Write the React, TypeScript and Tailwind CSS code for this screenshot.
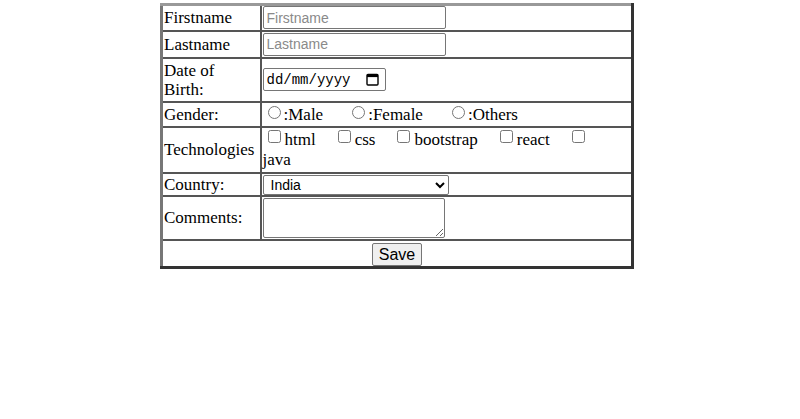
import React from 'react'

const serif = { fontFamily: '"Liberation Serif", "Times New Roman", serif' }
const sans = { fontFamily: '"Liberation Sans", Arial, sans-serif' }

function Label({ children }: { children: React.ReactNode }) {
  return <td className="border-2 border-[#555] pl-[1px] pr-[2px] py-0 w-[99px] align-middle leading-[19px]">{children}</td>
}

function Cell({ children, className = '' }: { children: React.ReactNode; className?: string }) {
  return <td className={`border-2 border-[#555] pl-[1px] pr-[2px] py-0 align-middle leading-[19px] ${className}`}>{children}</td>
}

const field =
  'border border-[#767676] rounded-[2px] px-[3px] text-[14px] text-black placeholder:text-[#8a8a8a] bg-white outline-none'

function CalendarIcon() {
  return (
    <svg width="13" height="13" viewBox="0 0 13 13" fill="none">
      <rect x="1" y="1.5" width="11" height="10.5" rx="1" stroke="black" strokeWidth="1.4" />
      <rect x="1" y="1.5" width="11" height="2.6" fill="black" />
    </svg>
  )
}

export default function App() {
  return (
    <div className="w-[800px] h-[419px] bg-white pt-[3px]" style={serif}>
      <table
        className="ml-[160px] w-[474px] border-collapse border-[3px] border-t-[#999] border-l-[#777] border-r-[#333] border-b-[#333] text-[17px] text-black"
        style={serif}
      >
        <tbody>
          <tr className="h-[26px]">
            <Label>Firstname</Label>
            <Cell>
              <input placeholder="Firstname" className={`${field} w-[183px] h-[23px] align-middle`} style={sans} />
            </Cell>
          </tr>
          <tr className="h-[27px]">
            <Label>Lastname</Label>
            <Cell>
              <input placeholder="Lastname" className={`${field} w-[183px] h-[23px] align-middle`} style={sans} />
            </Cell>
          </tr>
          <tr className="h-[44px]">
            <Label>
              Date of
              <br />
              Birth:
            </Label>
            <Cell>
              <div className="inline-flex items-center justify-between w-[123px] h-[23px] border border-[#767676] rounded-[2px] pl-[3px] pr-[6px] bg-white align-middle">
                <span className="text-[14px] leading-none" style={{ fontFamily: '"Liberation Mono", "DejaVu Sans Mono", monospace' }}>
                  dd/mm/yyyy
                </span>
                <CalendarIcon />
              </div>
            </Cell>
          </tr>
          <tr className="h-[25px]">
            <Label>Gender:</Label>
            <Cell className="pt-[1px]">
              <span className="inline-flex items-center">
                <input type="radio" name="g" className="w-[13px] h-[13px] m-0 ml-[5px] mr-[3px] -translate-y-[2px]" />
                :Male
              </span>
              <span className="inline-flex items-center ml-[29px]">
                <input type="radio" name="g" className="w-[13px] h-[13px] m-0 mr-[3px] -translate-y-[2px]" />
                :Female
              </span>
              <span className="inline-flex items-center ml-[29px]">
                <input type="radio" name="g" className="w-[13px] h-[13px] m-0 mr-[3px] -translate-y-[2px]" />
                :Others
              </span>
            </Cell>
          </tr>
          <tr className="h-[46px]">
            <Label>Technologies</Label>
            <Cell className="leading-[20px] pt-[1px]">
              <input type="checkbox" className="w-[13px] h-[13px] m-0 ml-[5px] mr-[4px] align-[2px]" />
              html
              <input type="checkbox" className="w-[13px] h-[13px] m-0 ml-[22px] mr-[4px] align-[2px]" />
              css
              <input type="checkbox" className="w-[13px] h-[13px] m-0 ml-[22px] mr-[4px] align-[2px]" />
              bootstrap
              <input type="checkbox" className="w-[13px] h-[13px] m-0 ml-[22px] mr-[4px] align-[2px]" />
              react
              <input type="checkbox" className="w-[13px] h-[13px] m-0 ml-[22px] mr-[4px] align-[2px]" />
              <br />
              java
            </Cell>
          </tr>
          <tr className="h-[23px]">
            <Label>Country:</Label>
            <Cell>
              <select className={`${field} w-[186px] h-[20px] py-0 align-middle`} style={sans} defaultValue="India">
                <option>India</option>
                <option>USA</option>
                <option>UK</option>
              </select>
            </Cell>
          </tr>
          <tr className="h-[44px]">
            <Label>Comments:</Label>
            <Cell>
              <textarea className={`${field} w-[182px] h-[40px] block`} />
            </Cell>
          </tr>
          <tr className="h-[26px]">
            <td colSpan={2} className="border-2 border-[#555] text-center py-0">
              <button
                className="border border-[#767676] rounded-[2px] bg-[#efefef] px-[6px] h-[23px] text-[16px] leading-none align-middle"
                style={sans}
              >
                Save
              </button>
            </td>
          </tr>
        </tbody>
      </table>
    </div>
  )
}
